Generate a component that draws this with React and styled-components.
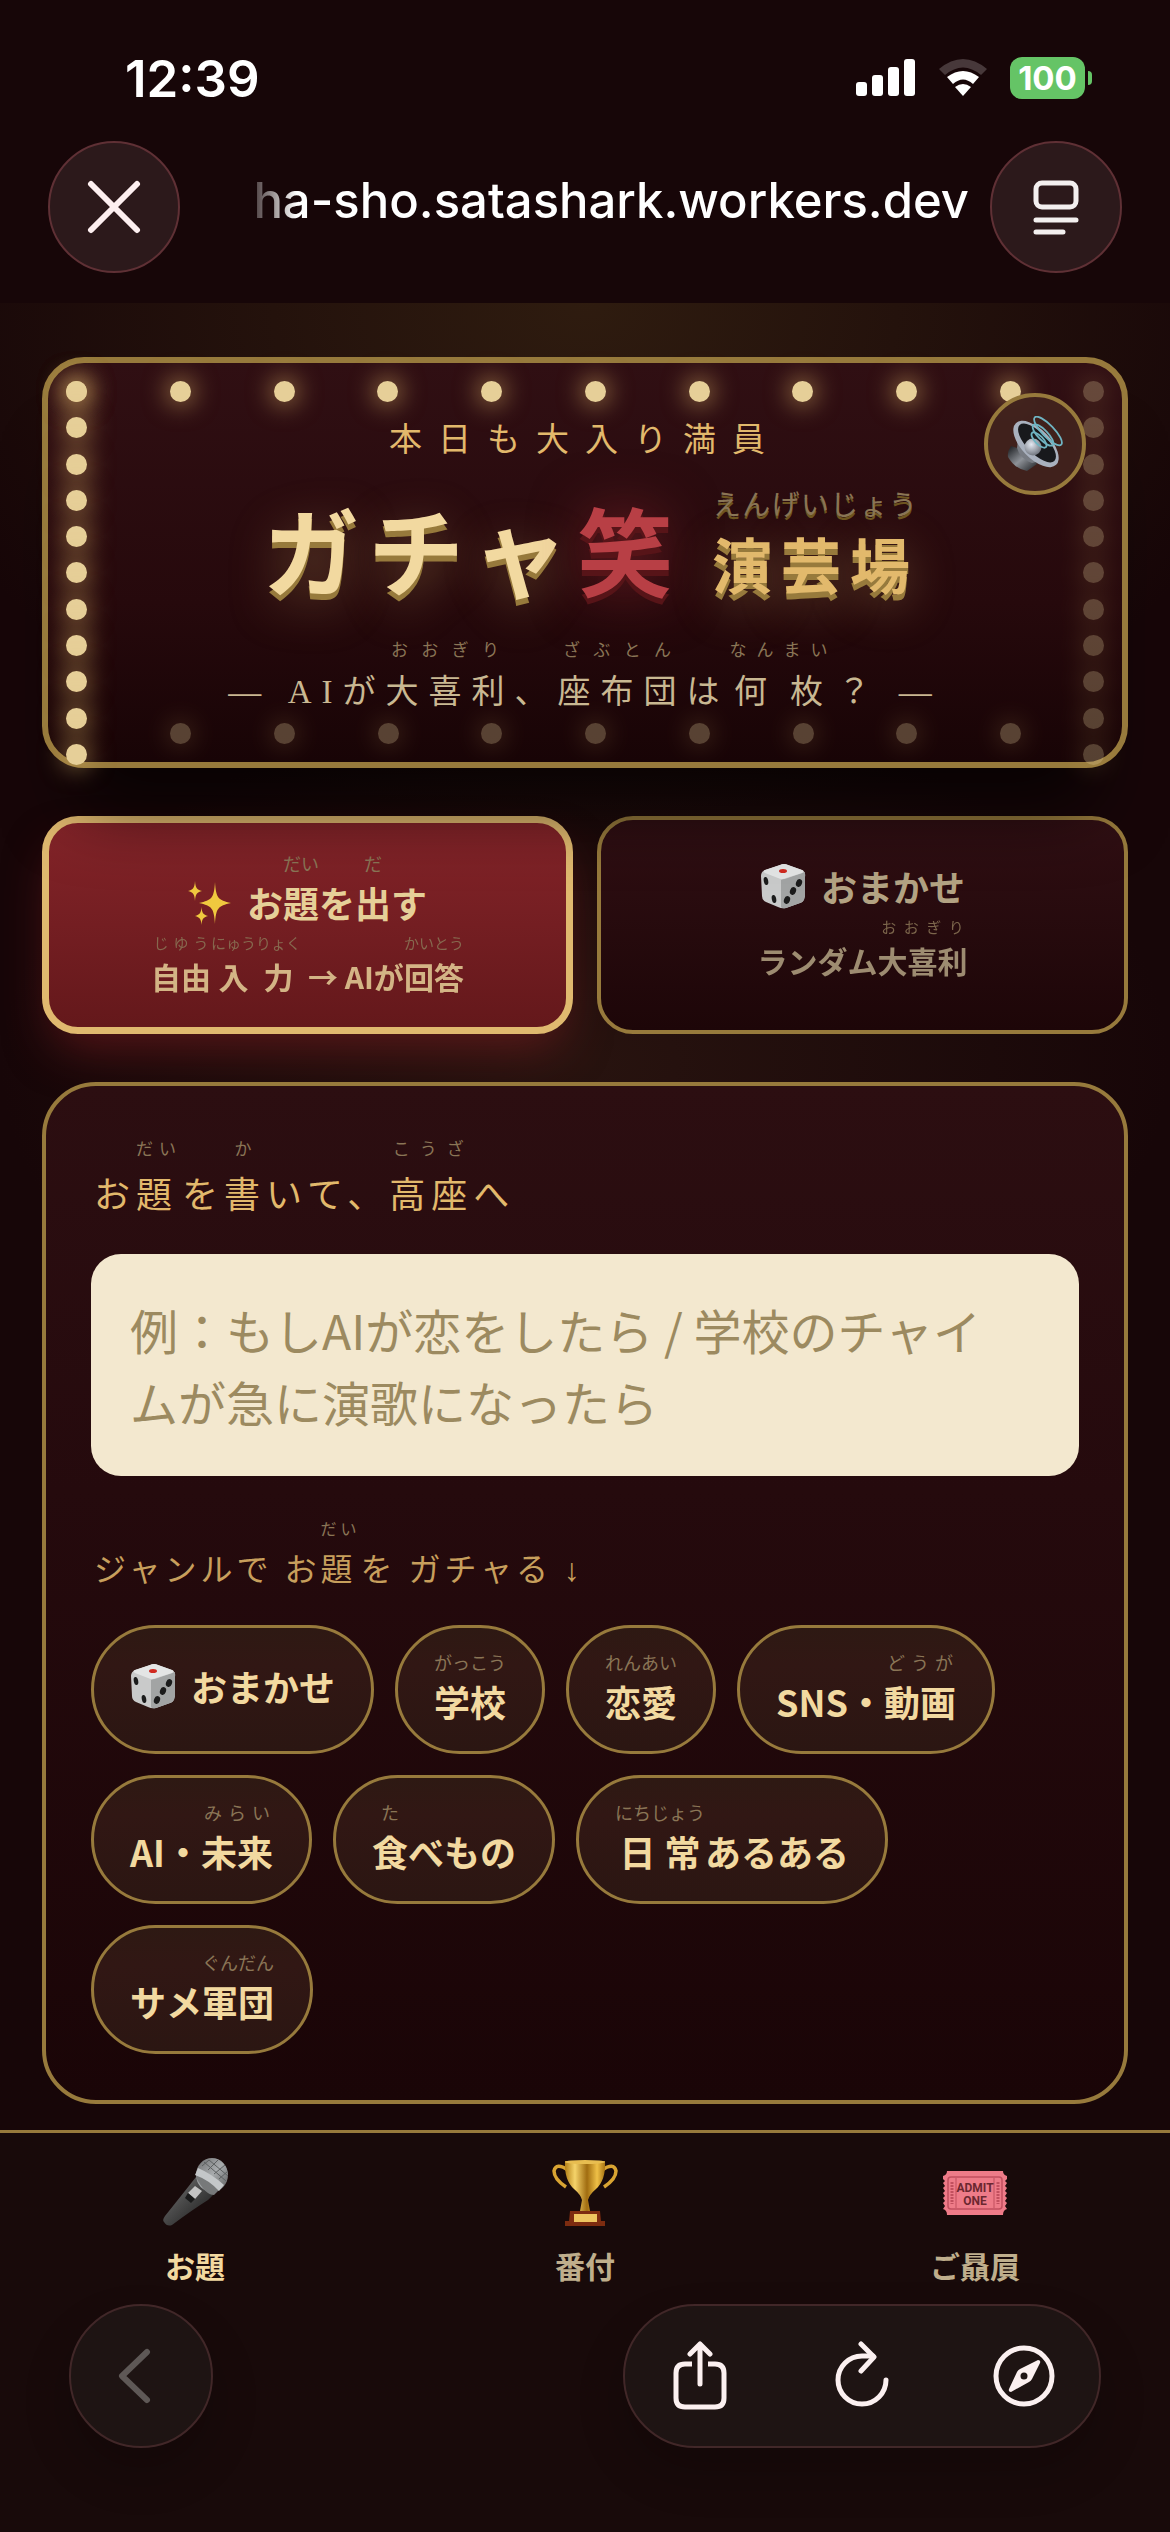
import React, { useState } from "react";
import styled, { createGlobalStyle } from "styled-components";

const SparklesIcon = () => (
  <svg width="44" height="44" viewBox="0 0 44 44" fill="#f0c93f" aria-hidden="true">
    <path d="M27 1C28 17 30 19 43 22C30 25 28 27 27 43C26 27 24 25 11 22C24 19 26 17 27 1Z" />
    <path d="M7 0C7.600 7 8.500 8.500 14 10C8.500 11.500 7.600 13 7 20C6.400 13 5.500 11.500 0 10C5.500 8.500 6.400 7 7 0Z" />
    <path d="M13.500 26C14 32 15 33.500 20 35C15 36.500 14 38 13.500 44C13 38 12 36.500 7 35C12 33.500 13 32 13.500 26Z" />
  </svg>
);

const DiceIcon = () => (
  <svg width="46" height="46" viewBox="0 0 46 46" aria-hidden="true">
    <path d="M20 2Q24 0 28 2L42 7Q46 9 45 14L44 35Q44 39 40 40L26 45Q22 46 18 44L6 39Q2 37 2 33L1 13Q1 9 5 7Z" fill="#c9caca" />
    <path d="M21 17Q23 16 25 16L45 9V34Q44 39 40 40L26 45Q22 46 21 44Z" fill="#a2a4a4" />
    <path d="M20 2Q24 0 28 2L42 7Q45 8 42 10L26 15Q22 17 18 15L5 10Q2 8 5 7Z" fill="#e4e5e5" />
    <ellipse cx="23" cy="8" rx="4" ry="2" fill="#d02a20" />
    <g fill="#1b1b1b">
      <ellipse cx="6" cy="18" rx="2.200" ry="4" transform="rotate(-12 6 18)" />
      <ellipse cx="14" cy="36" rx="2.200" ry="4" transform="rotate(-12 14 36)" />
      <ellipse cx="39" cy="20" rx="3" ry="4" transform="rotate(20 39 20)" />
      <ellipse cx="33" cy="28" rx="3" ry="4" transform="rotate(20 33 28)" />
      <ellipse cx="27" cy="37" rx="3" ry="4" transform="rotate(20 27 37)" />
    </g>
  </svg>
);

const SpeakerIcon = () => (
  <svg width="56" height="56" viewBox="0 0 56 56" aria-hidden="true">
    <defs>
      <linearGradient id="spk-body" x1="0" y1="0" x2="1" y2="1">
        <stop offset="0" stopColor="#15171a" />
        <stop offset="0.500" stopColor="#8d9197" />
        <stop offset="1" stopColor="#1a1c1f" />
      </linearGradient>
      <radialGradient id="spk-ball" cx="0.400" cy="0.350" r="0.700">
        <stop offset="0" stopColor="#e4e9f2" />
        <stop offset="1" stopColor="#6a6f78" />
      </radialGradient>
    </defs>
    <path d="M4 30L22 36L30 48L20 55Q8 53 1 41Q0 36 4 30Z" fill="url(#spk-body)" />
    <path d="M11 23L33 45L25 47Q13 43 10 32Z" fill="#777b82" />
    <ellipse cx="29" cy="28" rx="29" ry="14.500" transform="rotate(46 29 28)" fill="#a9b1be" />
    <ellipse cx="30" cy="27" rx="25" ry="10.500" transform="rotate(46 30 27)" fill="#18191c" />
    <circle cx="26" cy="31" r="8.500" fill="url(#spk-ball)" />
    <g fill="none" stroke="#6fb4c2" strokeWidth="1.800">
      <ellipse cx="32" cy="24" rx="10" ry="4" transform="rotate(46 32 24)" />
      <ellipse cx="36" cy="19" rx="14" ry="5" transform="rotate(46 36 19)" />
      <ellipse cx="41" cy="15" rx="19" ry="6" transform="rotate(46 41 15)" />
    </g>
  </svg>
);

const MicIcon = () => (
  <svg width="72" height="72" viewBox="0 0 72 72" aria-hidden="true">
    <defs>
      <linearGradient id="mic-body" x1="0" y1="0" x2="1" y2="1">
        <stop offset="0" stopColor="#808080" />
        <stop offset="0.450" stopColor="#4a4a4a" />
        <stop offset="1" stopColor="#161616" />
      </linearGradient>
      <linearGradient id="mic-head" x1="0" y1="0" x2="1" y2="1">
        <stop offset="0" stopColor="#6a6b6c" />
        <stop offset="0.500" stopColor="#a8abad" />
        <stop offset="1" stopColor="#58595a" />
      </linearGradient>
    </defs>
    <path d="M37 20L54 38L49 43Q33 53 13 68Q8 70 5 65Q3 63 6 59Q22 39 33 25Z" fill="url(#mic-body)" />
    <ellipse cx="53" cy="18" rx="16" ry="17" fill="url(#mic-head)" />
    <path d="M38 14Q52 22 62 31L55 38Q46 38 37 20Z" fill="#77797a" />
    <path d="M39 11Q53 17 65 28L60 34Q50 23 36 18Z" fill="#c4c7c9" />
    <path d="M45 5L67 24M50 3L69 19M43 9L50 3M49 13L59 3M55 17L66 8M60 22L69 14" stroke="#5d6061" strokeWidth="1" />
    <path d="M36 29L43 34L36 42L29 36Z" fill="#c4c4c4" />
    <path d="M29 36L36 42L32 46L26 41Z" fill="#1a1a1a" />
  </svg>
);

const TrophyIcon = () => (
  <svg width="66" height="66" viewBox="0 0 66 66" aria-hidden="true">
    <defs>
      <linearGradient id="cup" x1="0" x2="1">
        <stop offset="0" stopColor="#b37f16" />
        <stop offset="0.250" stopColor="#f5d36a" />
        <stop offset="0.550" stopColor="#a06c10" />
        <stop offset="0.800" stopColor="#efc047" />
        <stop offset="1" stopColor="#a87312" />
      </linearGradient>
    </defs>
    <path d="M16 10Q4 2 2 11Q2 19 14 27M50 10Q62 2 64 11Q64 19 52 27" fill="none" stroke="#d9a432" strokeWidth="3.500" />
    <path d="M13 1H53Q54 20 44 29Q37 35 36 40L38 51H28L30 40Q29 35 22 29Q12 20 13 1Z" fill="url(#cup)" />
    <ellipse cx="33" cy="2" rx="20" ry="2" fill="#e8bd50" />
    <path d="M18 51H48L49 61H53V66H13V61H17Z" fill="#7d2c10" />
    <rect x="22" y="54" width="23" height="8" fill="#eec560" />
  </svg>
);

const TicketIcon = () => (
  <svg width="66" height="46" viewBox="0 0 66 46" aria-hidden="true">
    <path
      d="M5 1H61Q61 5 65 6V9L63 11L65 13L63 16L65 18L63 21L65 23L63 26L65 28L63 31L65 33L63 36L65 39Q61 40 61 45H5Q5 40 1 39L3 36L1 33L3 31L1 28L3 26L1 23L3 21L1 18L3 16L1 13L3 11L1 9V6Q5 5 5 1Z"
      fill="#ee7b88"
    />
    <rect x="6" y="7" width="54" height="32" rx="3" fill="none" stroke="#c2505f" strokeWidth="1.500" />
    <path d="M14 8V38M52 8V38" stroke="#c2505f" strokeWidth="1" />
    <path d="M10 12V34M56 12V34" stroke="#c2505f" strokeWidth="3" strokeDasharray="2 1" />
    <text x="33" y="22" textAnchor="middle" fontFamily="Roboto, sans-serif" fontWeight="700" fontSize="12" fill="#6b2730">ADMIT</text>
    <text x="33" y="35" textAnchor="middle" fontFamily="Roboto, sans-serif" fontWeight="700" fontSize="12" fill="#6b2730">ONE</text>
  </svg>
);

const SignalIcon = () => (
  <svg width="60" height="38" viewBox="0 0 60 38" fill="#fff" aria-hidden="true">
    <rect x="0" y="23" width="11" height="14" rx="3" />
    <rect x="16" y="16" width="11" height="21" rx="3" />
    <rect x="32" y="8" width="11" height="29" rx="3" />
    <rect x="48" y="0" width="11" height="37" rx="3" />
  </svg>
);

const WifiIcon = () => (
  <svg width="50" height="38" viewBox="0 0 50 38" aria-hidden="true">
    <path d="M1 10Q25 -10 49 10L43 16Q25 1 7 16Z" fill="#47383a" />
    <path d="M9 18Q25 6 41 18L35 25Q25 16 15 25Z" fill="#fff" />
    <path d="M17 28Q25 22 33 28L25 37Z" fill="#fff" />
  </svg>
);

const CloseIcon = () => (
  <svg width="54" height="54" viewBox="0 0 54 54" fill="none" stroke="#fdeff0" strokeWidth="6" strokeLinecap="round" aria-hidden="true">
    <path d="M4 4L50 50M50 4L4 50" />
  </svg>
);

const PageMenuIcon = () => (
  <svg width="48" height="56" viewBox="0 0 48 56" fill="none" stroke="#f3efef" strokeWidth="5" strokeLinecap="round" aria-hidden="true">
    <rect x="4" y="4" width="40" height="24" rx="6" />
    <path d="M4 41H44M4 53H31" />
  </svg>
);

const BackIcon = () => (
  <svg width="34" height="56" viewBox="0 0 34 56" fill="none" stroke="#5e5856" strokeWidth="6" strokeLinecap="round" strokeLinejoin="round" aria-hidden="true">
    <path d="M29 4L4 28L29 52" />
  </svg>
);

const ShareIcon = () => (
  <svg width="56" height="70" viewBox="0 0 56 70" fill="none" stroke="#fbf0f0" strokeWidth="5" strokeLinecap="round" strokeLinejoin="round" aria-hidden="true">
    <path d="M20 23H13Q4 23 4 32V57Q4 66 13 66H43Q52 66 52 57V32Q52 23 43 23H36" strokeLinecap="butt" />
    <path d="M28 43V3M18 13L28 3L38 13" />
  </svg>
);

const ReloadIcon = () => (
  <svg width="56" height="70" viewBox="0 0 56 70" fill="none" stroke="#fbf0f0" strokeWidth="5" strokeLinecap="round" strokeLinejoin="round" aria-hidden="true">
    <path d="M52 39A24 24 0 1 1 28 15H39" />
    <path d="M27 3L40 16L27 30" />
  </svg>
);

const CompassIcon = () => (
  <svg width="62" height="62" viewBox="0 0 62 62" aria-hidden="true">
    <circle cx="31" cy="31" r="28" fill="none" stroke="#fbf0f0" strokeWidth="5" />
    <path
      fillRule="evenodd"
      fill="#fbf0f0"
      d="M45 15Q48 15 47 18L39 34Q38 36 36 37L18 47Q15 47 16 44L24 27Q25 25 27 24L45 15ZM31 27.500A3.500 3.500 0 1 0 31 34.500A3.500 3.500 0 1 0 31 27.500Z"
    />
  </svg>
);

// share of the wider line left free at each end when the shorter one is spread under it
const inset = (wide, narrow, count) =>
  Math.max(0, ((wide - narrow) / wide / count) * 50);

const Furi = ({ kana, scale = 0.5, children }) => {
  const base = children.length;
  const reading = kana.length * scale;
  return (
    <Ruby>
      <Base $inset={inset(reading, base, base)}>{children}</Base>
      <Kana $inset={inset(base, reading, kana.length)}>{kana}</Kana>
    </Ruby>
  );
};

const genres = [
  { id: "random", label: <>おまかせ</>, icon: true },
  { id: "school", label: <Furi kana="がっこう">学校</Furi> },
  { id: "love", label: <Furi kana="れんあい">恋愛</Furi> },
  { id: "sns", label: <>SNS・<Furi kana="どうが">動画</Furi></> },
  { id: "ai", label: <>AI・<Furi kana="みらい">未来</Furi></> },
  { id: "food", label: <><Furi kana="た">食</Furi>べもの</> },
  { id: "daily", label: <><Furi kana="にちじょう">日常</Furi>あるある</> },
  { id: "shark", label: <>サメ<Furi kana="ぐんだん">軍団</Furi></> },
];

const bulbs = (n) => Array.from({ length: n }, (_, i) => <Bulb key={i} />);

function App() {
  const [mode, setMode] = useState("write");
  const [topic, setTopic] = useState("");
  const [tab, setTab] = useState("topic");

  return (
    <Page>
      <GlobalStyle />
      <BrowserTop>
        <StatusBar>
          <Clock>12:39</Clock>
          <StatusIcons>
            <SignalIcon />
            <WifiIcon />
            <Battery>100</Battery>
          </StatusIcons>
        </StatusBar>
        <AddressBar>
          <GlassButton aria-label="閉じる">
            <CloseIcon />
          </GlassButton>
          <Address>ha-sho.satashark.workers.dev</Address>
          <GlassButton aria-label="ページメニュー">
            <PageMenuIcon />
          </GlassButton>
        </AddressBar>
      </BrowserTop>

      <Stage>
        <Marquee>
          <BulbRow $edge="top">{bulbs(10)}</BulbRow>
          <BulbColumn $side="left">{bulbs(11)}</BulbColumn>
          <BulbColumn $side="right" $dim>{bulbs(11)}</BulbColumn>
          <BulbRow $edge="bottom" $dim>{bulbs(9)}</BulbRow>
          <Tagline>本日も大入り満員</Tagline>
          <Title>
            ガチャ<Laugh>笑</Laugh>
            <Hall>
              <Furi kana="えんげいじょう" scale={0.4}>演芸場</Furi>
            </Hall>
          </Title>
          <Subtitle>
            — AIが<Furi kana="おおぎり">大喜利</Furi>、<Furi kana="ざぶとん">座布団</Furi>は
            <Furi kana="なんまい" scale={0.6}>何枚</Furi>？ —
          </Subtitle>
          <SoundButton aria-label="音声">
            <SpeakerIcon />
          </SoundButton>
        </Marquee>

        <Modes>
          <ModeButton $active={mode === "write"} onClick={() => setMode("write")}>
            <ModeName>
              <SparklesIcon />
              <span>
                お<Furi kana="だい">題</Furi>を<Furi kana="だ">出</Furi>す
              </span>
            </ModeName>
            <ModeNote>
              <Furi kana="じゆう">自由</Furi>
              <Furi kana="にゅうりょく">入力</Furi> → AIが<Furi kana="かいとう">回答</Furi>
            </ModeNote>
          </ModeButton>
          <ModeButton $active={mode === "random"} onClick={() => setMode("random")}>
            <ModeName>
              <DiceIcon />
              <span>おまかせ</span>
            </ModeName>
            <ModeNote>
              ランダム<Furi kana="おおぎり">大喜利</Furi>
            </ModeNote>
          </ModeButton>
        </Modes>

        <Panel>
          <TopicLabel htmlFor="topic">
            お<Furi kana="だい">題</Furi>を<Furi kana="か">書</Furi>いて、
            <Furi kana="こうざ">高座</Furi>へ
          </TopicLabel>
          <TopicInput
            id="topic"
            rows={2}
            value={topic}
            onChange={(e) => setTopic(e.target.value)}
            placeholder="例：もしAIが恋をしたら / 学校のチャイムが急に演歌になったら"
          />
          <GenreLabel>
            ジャンルで お<Furi kana="だい">題</Furi>を ガチャる ↓
          </GenreLabel>
          <Chips>
            {genres.map((g) => (
              <Chip key={g.id}>
                {g.icon && <DiceIcon />}
                <span>{g.label}</span>
              </Chip>
            ))}
          </Chips>
        </Panel>
      </Stage>

      <BottomArea>
        <Tabs>
          <Tab href="#topic" $active={tab === "topic"} onClick={() => setTab("topic")}>
            <TabIcon><MicIcon /></TabIcon>
            お題
          </Tab>
          <Tab href="#ranking" $active={tab === "ranking"} onClick={() => setTab("ranking")}>
            <TabIcon><TrophyIcon /></TabIcon>
            番付
          </Tab>
          <Tab href="#support" $active={tab === "support"} onClick={() => setTab("support")}>
            <TabIcon><TicketIcon /></TabIcon>
            ご贔屓
          </Tab>
        </Tabs>
        <BrowserTools>
          <BackButton aria-label="戻る">
            <BackIcon />
          </BackButton>
          <ToolPill>
            <ToolButton aria-label="共有"><ShareIcon /></ToolButton>
            <ToolButton aria-label="再読み込み"><ReloadIcon /></ToolButton>
            <ToolButton aria-label="ブラウザで開く"><CompassIcon /></ToolButton>
          </ToolPill>
        </BrowserTools>
      </BottomArea>
    </Page>
  );
}

export default App;

const gold = "#977a3c";
const brush = `"Liberation Serif", "Noto Sans CJK JP", serif`;

const GlobalStyle = createGlobalStyle`
  * {
    box-sizing: border-box;
  }
  body {
    margin: 0;
    background: #170608;
    font-family: "Noto Sans CJK JP", sans-serif;
  }
  button {
    font-family: inherit;
    cursor: pointer;
  }
  svg {
    display: block;
    flex: none;
  }
`;

const Page = styled.div`
  min-height: 100vh;
  display: flex;
  flex-direction: column;
`;

const BrowserTop = styled.header`
  background: #170608;
  padding: 48px 48px 30px;
  font-family: Inter, sans-serif;
  color: #fff;
`;

const StatusBar = styled.div`
  display: flex;
  justify-content: space-between;
  align-items: center;
  height: 60px;
  padding: 0 31px 0 77px;
  margin-bottom: 33px;
`;

const Clock = styled.time`
  font-size: 51px;
  font-weight: 600;
`;

const StatusIcons = styled.div`
  display: flex;
  align-items: center;
  gap: 22px;
`;

const Battery = styled.span`
  position: relative;
  width: 75px;
  height: 42px;
  margin-right: 6px;
  border-radius: 12px;
  background: #65c466;
  font-size: 33px;
  line-height: 42px;
  font-weight: 700;
  text-align: center;

  &::after {
    content: "";
    position: absolute;
    right: -7px;
    top: 14px;
    width: 4px;
    height: 14px;
    border-radius: 0 4px 4px 0;
    background: #65c466;
  }
`;

const AddressBar = styled.div`
  display: flex;
  align-items: center;
  gap: 21px;
`;

const GlassButton = styled.button`
  flex: none;
  display: flex;
  align-items: center;
  justify-content: center;
  width: 132px;
  height: 132px;
  padding: 0;
  border: 2px solid #5f3035;
  border-radius: 50%;
  background: #2c191b;
`;

const Address = styled.div`
  flex: 1;
  text-align: right;
  font-size: 49px;
  line-height: 60px;
  font-weight: 500;
  padding-bottom: 12px;
  white-space: nowrap;
  mask-image: linear-gradient(90deg, transparent 40px, #000 96px);
`;

const Stage = styled.main`
  flex: 1;
  display: flex;
  flex-direction: column;
  gap: 48px;
  padding: 54px 42px 26px;
  background:
    radial-gradient(ellipse 60% 520px at 50% 0, rgba(62, 42, 20, 0.6), transparent),
    radial-gradient(ellipse 50% 360px at 50% 760px, rgba(56, 32, 22, 0.5), transparent),
    #170608;
`;

const Marquee = styled.section`
  position: relative;
  z-index: 1;
  padding: 53px 60px 46px;
  border: 6px solid ${gold};
  border-radius: 42px;
  background: linear-gradient(#300f13, #26090c 60%, #180406);
  box-shadow: 0 72px 72px -36px rgba(0, 0, 0, 0.7);
  text-align: center;
  font-family: ${brush};
`;

const Bulb = styled.i`
  width: 21px;
  height: 21px;
  border-radius: 50%;
  background: #e6cf98;
  box-shadow: 0 0 24px 3px rgba(226, 185, 108, 0.6);
`;

const BulbRow = styled.div`
  position: absolute;
  ${(p) => p.$edge}: 18px;
  left: ${(p) => (p.$edge === "top" ? 18 : 122)}px;
  right: 101px;
  display: flex;
  justify-content: space-between;
  opacity: ${(p) => (p.$dim ? 0.3 : 1)};
`;

const BulbColumn = styled.div`
  position: absolute;
  ${(p) => p.$side}: 18px;
  top: 18px;
  bottom: -3px;
  display: flex;
  flex-direction: column;
  justify-content: space-between;
  opacity: ${(p) => (p.$dim ? 0.3 : 1)};
`;

const Ruby = styled.ruby`
  display: inline-flex;
  flex-direction: column-reverse;
  baseline-source: last;
  white-space: nowrap;
  text-align: justify;
  text-align-last: justify;
`;

const Base = styled.span`
  display: block;
  padding: 0 ${(p) => p.$inset}%;
`;

const Kana = styled.rt`
  display: block;
  padding: 0 ${(p) => p.$inset}%;
  font-size: 18px;
  line-height: 30px;
  font-weight: 400;
  color: #8a7556;
  text-align: justify;
`;

const Tagline = styled.p`
  margin: 0;
  font-size: 33px;
  line-height: 48px;
  letter-spacing: 16px;
  color: #e2b96c;
`;

const Title = styled.h1`
  margin: 9px 0 0;
  padding-left: 12px;
  font-size: 96px;
  line-height: 126px;
  letter-spacing: 9px;
  font-weight: 700;
  color: #f2d9a0;
  text-shadow: 0 6px 0 ${gold}, 0 12px 48px rgba(226, 185, 108, 0.35);
`;

const Laugh = styled.span`
  color: #b83f45;
  text-shadow: 0 6px 0 #571418, 0 0 54px rgba(184, 50, 60, 0.5);
`;

const Hall = styled.span`
  margin-left: 30px;
  font-size: 60px;
  line-height: 60px;
  color: #e2b96c;

  ${Kana} {
    font-size: 28px;
    line-height: 66px;
    letter-spacing: 1px;
    text-shadow: 0 3px 0 #6e5520;
  }
`;

const Subtitle = styled.p`
  margin: 14px 0 0;
  font-size: 33px;
  line-height: 48px;
  letter-spacing: 10px;
  color: #c9b892;

  ${Kana} {
    font-size: 17px;
    line-height: 34px;
  }
`;

const SoundButton = styled.button`
  position: absolute;
  top: 30px;
  right: 36px;
  display: flex;
  align-items: center;
  justify-content: center;
  width: 102px;
  height: 102px;
  padding: 0;
  border: 4px solid ${gold};
  border-radius: 50%;
  background: rgba(65, 35, 30, 0.95);
`;

const Modes = styled.div`
  display: grid;
  grid-template-columns: 1fr 1fr;
  gap: 24px;
`;

const ModeButton = styled.button`
  display: flex;
  flex-direction: column;
  align-items: center;
  justify-content: center;
  gap: 3px;
  min-height: 218px;
  padding: 12px 24px 21px;
  border: ${(p) => (p.$active ? "7px solid #e0b96f" : `4px solid ${gold}`)};
  border-radius: 36px;
  background: ${(p) =>
    p.$active ? "linear-gradient(#842429, #64181b)" : "linear-gradient(#300f13, #1d0608)"};
  box-shadow: ${(p) => (p.$active ? "0 24px 48px -12px rgba(150, 35, 40, 0.5)" : "none")};
  color: ${(p) => (p.$active ? "#e6cf98" : "#b3a383")};
  font-weight: 700;
`;

const ModeName = styled.span`
  display: flex;
  align-items: flex-end;
  gap: 15px;
  font-size: 36px;
  line-height: 45px;

  ${Kana} {
    line-height: 33px;
  }
`;

const ModeNote = styled.span`
  font-size: 30px;
  line-height: 36px;
  opacity: 0.85;

  ${Kana} {
    font-size: 15px;
  }
`;

const Panel = styled.section`
  flex: 1;
  padding: 45px 45px 45px;
  border: 4px solid ${gold};
  border-radius: 54px;
  background: linear-gradient(#2c0e11, #250a0d 40%, #1a0507);
`;

const TopicLabel = styled.label`
  display: block;
  padding-left: 3px;
  margin-bottom: 31px;
  font-family: ${brush};
  font-size: 36px;
  line-height: 54px;
  letter-spacing: 6px;
  color: #e2b96c;

  ${Kana} {
    font-size: 17px;
    line-height: 38px;
  }
`;

const TopicInput = styled.textarea`
  display: block;
  width: 100%;
  height: 222px;
  padding: 39px 66px 39px 39px;
  border: 0;
  border-radius: 30px;
  background: #f3e8cf;
  color: #2a1410;
  font-family: "Noto Sans CJK JP", sans-serif;
  font-size: 48px;
  line-height: 72px;
  resize: none;

  &::placeholder {
    color: #9c8a60;
    opacity: 1;
  }
`;

const GenreLabel = styled.p`
  margin: 38px 0 31px;
  padding-left: 3px;
  font-family: ${brush};
  font-size: 32px;
  line-height: 48px;
  letter-spacing: 4px;
  color: #c79f5c;

  ${Kana} {
    font-size: 16px;
    line-height: 32px;
  }
`;

const Chips = styled.div`
  display: flex;
  flex-wrap: wrap;
  gap: 21px;
`;

const Chip = styled.button`
  display: flex;
  align-items: center;
  gap: 15px;
  height: 129px;
  padding: 0 36px 8px;
  border: 3px solid ${gold};
  border-radius: 65px;
  background: linear-gradient(#2e1913, #311714 30%, #2b1612);
  color: #f2d9a0;
  font-size: 36px;
  line-height: 48px;
  font-weight: 700;
`;

const BottomArea = styled.footer`
  border-top: 3px solid ${gold};
  background: #180a0a;
`;

const Tabs = styled.nav`
  display: grid;
  grid-template-columns: repeat(3, 1fr);
  padding-top: 24px;
`;

const Tab = styled.a`
  display: flex;
  flex-direction: column;
  align-items: center;
  font-size: 30px;
  line-height: 42px;
  font-weight: 700;
  text-decoration: none;
  color: ${(p) => (p.$active ? "#f2d9a0" : "#bfae8c")};
`;

const TabIcon = styled.span`
  display: flex;
  align-items: center;
  height: 72px;
  margin-bottom: 15px;
`;

const BrowserTools = styled.div`
  display: flex;
  justify-content: space-between;
  padding: 18px 69px 84px;
`;

const BackButton = styled.button`
  display: flex;
  align-items: center;
  justify-content: center;
  width: 144px;
  height: 144px;
  padding: 0 12px 0 0;
  border: 2px solid #412728;
  border-radius: 50%;
  background: #1e1413;
  box-shadow: 0 24px 48px rgba(0, 0, 0, 0.2);
`;

const ToolPill = styled.div`
  display: flex;
  align-items: center;
  justify-content: space-between;
  width: 478px;
  height: 144px;
  padding: 0 30px;
  border: 2px solid #412728;
  border-radius: 72px;
  background: #1e1413;
  box-shadow: 0 24px 48px rgba(0, 0, 0, 0.2);
`;

const ToolButton = styled.button`
  display: flex;
  align-items: center;
  justify-content: center;
  width: 90px;
  height: 90px;
  padding: 0;
  border: 0;
  background: none;
`;
